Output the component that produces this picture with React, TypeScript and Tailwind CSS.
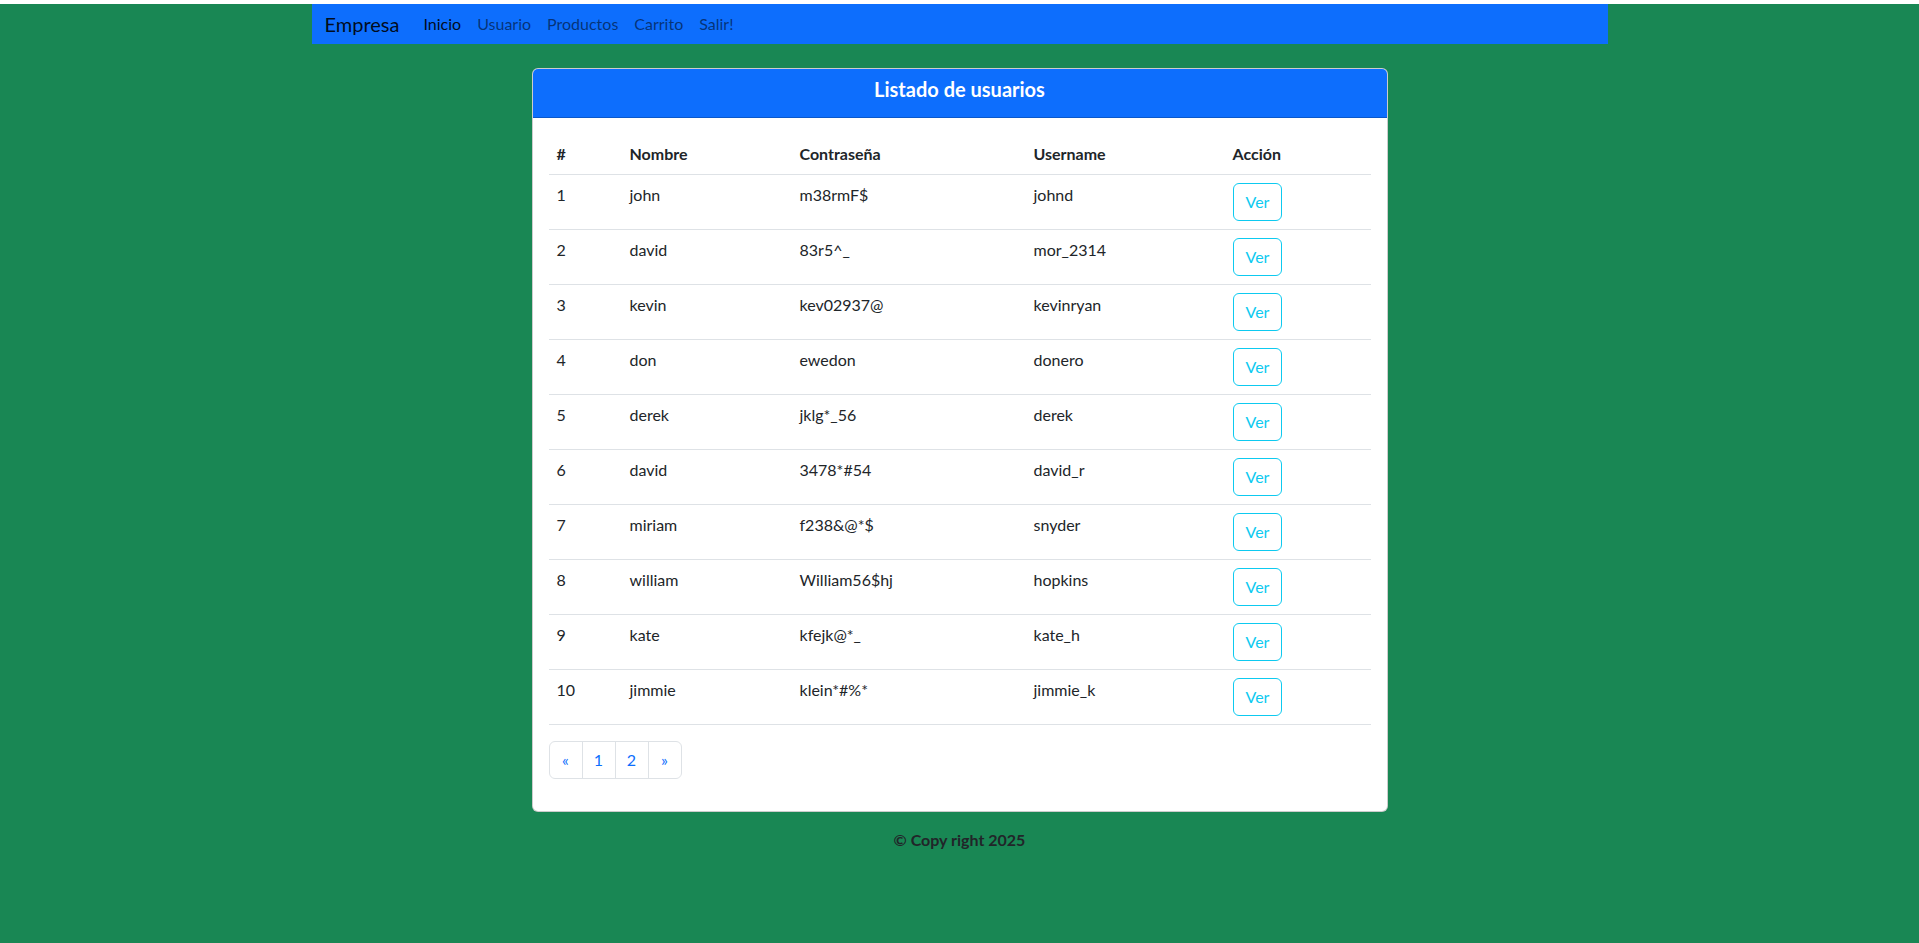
const usuarios = [
  { id: 1, nombre: "john", pass: "m38rmF$", username: "johnd" },
  { id: 2, nombre: "david", pass: "83r5^_", username: "mor_2314" },
  { id: 3, nombre: "kevin", pass: "kev02937@", username: "kevinryan" },
  { id: 4, nombre: "don", pass: "ewedon", username: "donero" },
  { id: 5, nombre: "derek", pass: "jklg*_56", username: "derek" },
  { id: 6, nombre: "david", pass: "3478*#54", username: "david_r" },
  { id: 7, nombre: "miriam", pass: "f238&@*$", username: "snyder" },
  { id: 8, nombre: "william", pass: "William56$hj", username: "hopkins" },
  { id: 9, nombre: "kate", pass: "kfejk@*_", username: "kate_h" },
  { id: 10, nombre: "jimmie", pass: "klein*#%*", username: "jimmie_k" },
];

const links = ["Usuario", "Productos", "Carrito", "Salir!"];

function Navbar() {
  return (
    <nav className="mx-auto mt-1 flex h-10 w-[1296px] items-center bg-[#0d6efd] pl-[13px]">
      <span className="mr-4 text-[20px] leading-[30px] text-black/90">Empresa</span>
      <a className="px-2 text-base leading-6 text-black/90">Inicio</a>
      {links.map((l) => (
        <a key={l} className="px-2 text-base leading-6 text-black/55">
          {l}
        </a>
      ))}
    </nav>
  );
}

function Paginacion() {
  const items = ["«", "1", "2", "»"];
  return (
    <ul className="mb-4 flex">
      {items.map((it, i) => (
        <li
          key={it}
          className={`-ml-px flex h-[38px] w-[34px] items-center justify-center border border-[#dee2e6] text-base text-[#0d6efd] first:ml-0 ${
            i === 0 ? "rounded-l-md" : ""
          } ${i === items.length - 1 ? "rounded-r-md" : ""}`}
        >
          {it}
        </li>
      ))}
    </ul>
  );
}

export default function App() {
  return (
    <div className="h-[943px] bg-[#e6dde2]">
      <div
        className="h-[941px] bg-[#198754] text-[#212529]"
        style={{ fontFamily: '"Segoe UI", Lato, "Liberation Sans", sans-serif' }}
      >
        <Navbar />

        <section className="mx-auto mt-6 w-[856px] overflow-hidden rounded-md border border-black/20 bg-white">
          <div className="border-b border-black/20 bg-[#0d6efd] px-4 py-2">
            <h5 className="mb-2 text-center text-[20px] leading-6 font-bold text-white">
              Listado de usuarios
            </h5>
          </div>

          <div className="p-4">
            <table className="mb-4 w-full table-fixed border-collapse text-left text-base leading-6">
              <colgroup>
                <col className="w-[73px]" />
                <col className="w-[170px]" />
                <col className="w-[234px]" />
                <col className="w-[199px]" />
                <col className="w-[146px]" />
              </colgroup>
              <thead>
                <tr className="border-b border-[#dee2e6]">
                  <th className="p-2 font-bold">#</th>
                  <th className="p-2 font-bold">Nombre</th>
                  <th className="p-2 font-bold">Contraseña</th>
                  <th className="p-2 font-bold">Username</th>
                  <th className="p-2 font-bold">Acción</th>
                </tr>
              </thead>
              <tbody>
                {usuarios.map((u) => (
                  <tr key={u.id} className="border-b border-[#dee2e6] align-top">
                    <td className="p-2">{u.id}</td>
                    <td className="p-2">{u.nombre}</td>
                    <td className="p-2">{u.pass}</td>
                    <td className="p-2">{u.username}</td>
                    <td className="p-2">
                      <button className="h-[38px] rounded-md border border-[#0dcaf0] px-3 text-base text-[#0dcaf0]">
                        Ver
                      </button>
                    </td>
                  </tr>
                ))}
              </tbody>
            </table>

            <Paginacion />
          </div>
        </section>

        <footer className="pt-4 text-center text-base leading-6 font-bold">
          © Copy right 2025
        </footer>
      </div>
    </div>
  );
}
